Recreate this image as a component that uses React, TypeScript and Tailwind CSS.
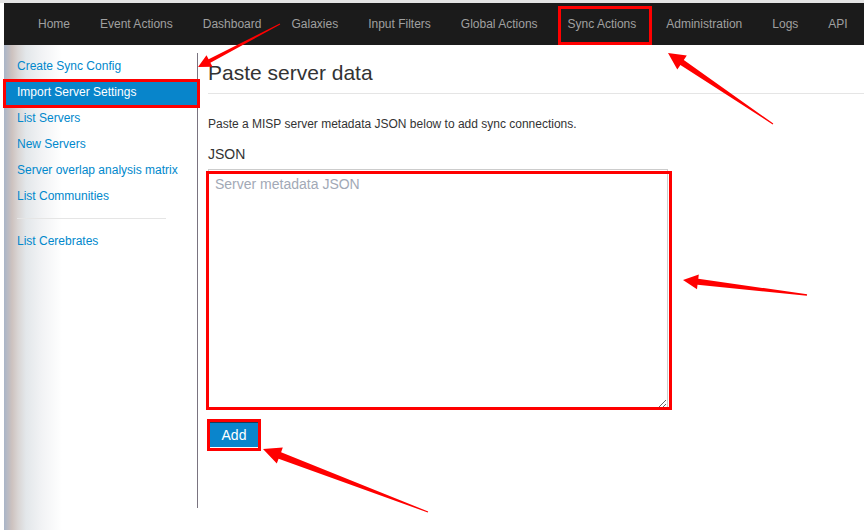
import React from "react";

type Pt = [number, number];

function arrowPoints(tail: Pt, tip: Pt, headLen: number, headW: number, neckW: number, tailW: number): string {
  const dx = tip[0] - tail[0];
  const dy = tip[1] - tail[1];
  const len = Math.sqrt(dx * dx + dy * dy);
  const ux = dx / len;
  const uy = dy / len;
  const nx = -uy;
  const ny = ux;
  const neck: Pt = [tip[0] - ux * headLen, tip[1] - uy * headLen];
  const pts: Pt[] = [
    [tail[0] + (nx * tailW) / 2, tail[1] + (ny * tailW) / 2],
    [neck[0] + (nx * neckW) / 2, neck[1] + (ny * neckW) / 2],
    [neck[0] + (nx * headW) / 2, neck[1] + (ny * headW) / 2],
    tip,
    [neck[0] - (nx * headW) / 2, neck[1] - (ny * headW) / 2],
    [neck[0] - (nx * neckW) / 2, neck[1] - (ny * neckW) / 2],
    [tail[0] - (nx * tailW) / 2, tail[1] - (ny * tailW) / 2],
  ];
  return pts.map((p) => `${p[0].toFixed(1)},${p[1].toFixed(1)}`).join(" ");
}

const navItems = [
  "Home",
  "Event Actions",
  "Dashboard",
  "Galaxies",
  "Input Filters",
  "Global Actions",
  "Sync Actions",
  "Administration",
  "Logs",
  "API",
];

const sideItems = [
  "Create Sync Config",
  "Import Server Settings",
  "List Servers",
  "New Servers",
  "Server overlap analysis matrix",
  "List Communities",
];

export default function App() {
  return (
    <div className="relative w-[864px] h-[530px] overflow-hidden bg-white font-['Liberation_Sans',Arial,sans-serif]">
      <div className="h-[3px] bg-[#e4e4e4]" />
      <div className="ml-[4px] flex h-[42px] items-stretch bg-[#1b1b1b] pl-[19px] text-[12px] text-[#a0a0a0]">
        {navItems.map((n) => (
          <div key={n} className="relative flex items-center px-[15px] whitespace-nowrap">
            {n}
            {n === "Sync Actions" && (
              <div className="absolute left-[5px] right-[-1px] top-[3px] bottom-0 border-[3px] border-[#ff0000]" />
            )}
          </div>
        ))}
      </div>
      <div className="flex h-[485px] pl-[4px]">
        <div className="w-[193px] shrink-0 pt-[8px] text-[12px] bg-[linear-gradient(to_right,#a9b5c8_0px,#cdc2bf_8px,#d9d5d4_14px,#e3e7ea_22px,#f2f3f5_38px,#ffffff_58px)]">
          {sideItems.map((s) =>
            s === "Import Server Settings" ? (
              <div key={s} className="relative flex h-[26px] items-center bg-[#0885cb] pl-[13px] text-white">
                {s}
                <div className="absolute left-[-1px] right-[-3px] top-0 bottom-[-3px] border-[3px] border-[#ff0000]" />
              </div>
            ) : (
              <div key={s} className="flex h-[26px] items-center pl-[13px] text-[#0088cc]">
                {s}
              </div>
            )
          )}
          <div className="my-[9px] ml-[13px] h-px w-[149px] bg-[#e5e5e5]" />
          <div className="flex h-[26px] items-center pl-[13px] text-[#0088cc]">List Cerebrates</div>
        </div>
        <div className="mt-[8px] h-[455px] flex-1 border-l border-[#7a7480] pl-[10px] text-[#333333]">
          <div className="border-b border-[#e5e5e5] pt-[8px] pb-[8px] text-[21px] leading-[24px]">Paste server data</div>
          <div className="mt-[21px] text-[12px] leading-[18px]">
            Paste a MISP server metadata JSON below to add sync connections.
          </div>
          <div className="mt-[11px] text-[14px] leading-[20px]">JSON</div>
          <div className="relative mt-[5px] h-[240px] w-[460px]">
            <textarea
              className="block h-[240px] w-[460px] border border-[#cccccc] px-[6px] pt-[4px] text-[14px] leading-[20px] text-[#333] outline-none placeholder:text-[#a2a9b6] font-['Liberation_Sans',Arial,sans-serif]"
              placeholder="Server metadata JSON"
            />
            <div className="pointer-events-none absolute left-[-2px] right-[-4px] top-[2px] bottom-[-1px] border-[3px] border-[#ff0000]" />
          </div>
          <div className="relative ml-[2px] mt-[13px] flex h-[25px] w-[48px] items-center justify-center border-t border-[#1a3c5a] bg-[#0a85cc] text-[14px] text-white">
            Add
            <div className="absolute left-[-3px] right-[-3px] top-[-4px] bottom-[-4px] border-[3px] border-[#ff0000]" />
          </div>
        </div>
      </div>
      <svg className="pointer-events-none absolute left-0 top-0" width={864} height={530} viewBox="0 0 864 530">
        <polygon points={arrowPoints([280, 24], [198, 67], 13, 13, 4, 1)} fill="#ff0000" />
        <polygon points={arrowPoints([773, 124], [668, 53], 17, 17, 6, 1)} fill="#ff0000" />
        <polygon points={arrowPoints([807, 295], [683, 280], 15, 15, 6, 1.5)} fill="#ff0000" />
        <polygon points={arrowPoints([428, 512], [263, 449], 18, 17, 7, 1)} fill="#ff0000" />
      </svg>
    </div>
  );
}
